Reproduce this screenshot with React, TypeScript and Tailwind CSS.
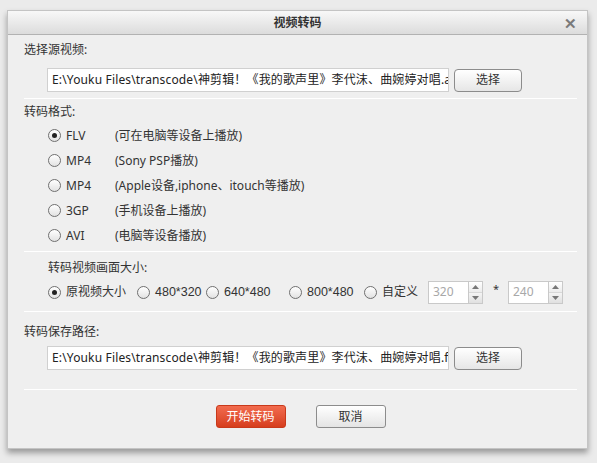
import React from "react";

const FONT = { fontFamily: '"Noto Sans", "Noto Sans CJK SC", sans-serif' };
const NUM = { fontFamily: '"Liberation Sans", "Noto Sans CJK SC", sans-serif' };

function Radio({ checked }: { checked?: boolean }) {
  return (
    <span className="relative inline-flex h-[13px] w-[13px] shrink-0 items-center justify-center rounded-full border border-[#707070] bg-gradient-to-b from-white to-[#e2e2e2]">
      {checked && <span className="h-[5px] w-[5px] rounded-full bg-[#222]" />}
    </span>
  );
}

function Sep({ cls }: { cls: string }) {
  return <div className={`h-px w-full bg-white ${cls}`} />;
}

function PathRow({ text }: { text: string }) {
  return (
    <div className="flex h-[24px] items-center pl-[23px]">
      <div className="flex h-[24px] w-[402px] items-center overflow-hidden whitespace-nowrap border border-[#d0d0d0] bg-white pl-[4px] text-[12px] tracking-[0.15px] text-[#222]">
        {text}
      </div>
      <button className="ml-[5px] flex h-[23px] w-[68px] items-center justify-center rounded-[4px] border border-[#8c8c8c] bg-gradient-to-b from-white to-[#e6e6e6] text-[12px] text-[#333]">
        选择
      </button>
    </div>
  );
}

function Spinner({ value }: { value: string }) {
  return (
    <div className="flex h-[23px] w-[55px] shrink-0 border border-[#c9c9c9] bg-white">
      <div className="flex flex-1 items-center pl-[4px] text-[12px] text-[#a8a8a8]">{value}</div>
      <div className="flex w-[14px] flex-col border-l border-[#c9c9c9]">
        <div className="flex flex-1 items-center justify-center border-b border-[#d8d8d8] bg-gradient-to-b from-white to-[#ececec]">
          <svg width="7" height="4" viewBox="0 0 7 4"><path d="M0 4 L3.5 0 L7 4 Z" fill="#777" /></svg>
        </div>
        <div className="flex flex-1 items-center justify-center bg-gradient-to-b from-[#f4f4f4] to-[#e0e0e0]">
          <svg width="7" height="4" viewBox="0 0 7 4"><path d="M0 0 L3.5 4 L7 0 Z" fill="#777" /></svg>
        </div>
      </div>
    </div>
  );
}

const formats: [string, string, boolean][] = [
  ["FLV", "(可在电脑等设备上播放)", true],
  ["MP4", "(Sony PSP播放)", false],
  ["MP4", "(Apple设备,iphone、itouch等播放)", false],
  ["3GP", "(手机设备上播放)", false],
  ["AVI", "(电脑等设备播放)", false],
];

export default function App() {
  const path = "E:\\Youku Files\\transcode\\神剪辑！《我的歌声里》李代沫、曲婉婷对唱.avi";
  const path2 = "E:\\Youku Files\\transcode\\神剪辑！《我的歌声里》李代沫、曲婉婷对唱.flv";
  return (
    <div className="h-[463px] w-[597px] overflow-hidden bg-[#ebebeb] pl-[7px] pt-[10px]" style={FONT}>
      <div className="flex h-[439px] w-[581px] flex-col border border-[#c4c4c4] bg-[#efefef] shadow-[0_4px_6px_rgba(0,0,0,0.35)]">
        <div className="relative flex h-[24px] shrink-0 items-center justify-center border-b border-[#b2b2b2] bg-gradient-to-b from-[#f8f8f8] to-[#dcdcdc]">
          <span className="text-[12px] font-bold text-[#333]">视频转码</span>
          <span className="absolute right-[10px] top-[3px] text-[15px] font-bold leading-[18px] text-[#7a7a7a]">✕</span>
        </div>
        <div className="flex flex-col pl-[16px] pr-[10px] text-[12px] text-[#333]">
          <div className="mt-[6px] flex h-[18px] items-center">选择源视频:</div>
          <div className="mt-[9px]"><PathRow text={path} /></div>
          <Sep cls="mt-[6px]" />
          <div className="mt-[3px] flex h-[19px] items-center">转码格式:</div>
          <div className="mt-[2px] flex flex-col pl-[24px]">
            {formats.map(([f, d, c], i) => (
              <div key={i} className="flex h-[25px] items-center">
                <Radio checked={c} />
                <span className="ml-[5px] w-[49px]">{f}</span>
                <span>{d}</span>
              </div>
            ))}
          </div>
          <Sep cls="mt-[3px]" />
          <div className="mt-[7px] flex h-[18px] items-center pl-[24px]">转码视频画面大小:</div>
          <div className="mt-[3px] flex h-[24px] items-center pl-[24px] whitespace-nowrap">
            <Radio checked />
            <span className="ml-[5px] w-[71px]">原视频大小</span>
            <Radio />
            <span className="ml-[5px] w-[51px] text-[12.5px]" style={NUM}>480*320</span>
            <Radio />
            <span className="ml-[5px] w-[65px] text-[12.5px]" style={NUM}>640*480</span>
            <Radio />
            <span className="ml-[5px] w-[57px] text-[12.5px]" style={NUM}>800*480</span>
            <Radio />
            <span className="ml-[5px] w-[46px]">自定义</span>
            <Spinner value="320" />
            <span className="w-[25px] self-start pl-[10px] pt-[1px] text-[11px]">*</span>
            <Spinner value="240" />
          </div>
          <Sep cls="mt-[7px]" />
          <div className="mt-[11px] flex h-[18px] items-center">转码保存路径:</div>
          <div className="mt-[5px]"><PathRow text={path2} /></div>
          <Sep cls="mt-[19px]" />
          <div className="mt-[15px] flex items-center justify-center gap-[30px]">
            <button className="flex h-[23px] w-[70px] items-center justify-center rounded-[3px] border border-[#c8391b] bg-gradient-to-b from-[#f26b4e] to-[#d63d1c] text-[12px] text-white">
              开始转码
            </button>
            <button className="flex h-[23px] w-[70px] items-center justify-center rounded-[3px] border border-[#8c8c8c] bg-gradient-to-b from-white to-[#e4e4e4] text-[12px] text-[#333]">
              取消
            </button>
          </div>
        </div>
      </div>
    </div>
  );
}
